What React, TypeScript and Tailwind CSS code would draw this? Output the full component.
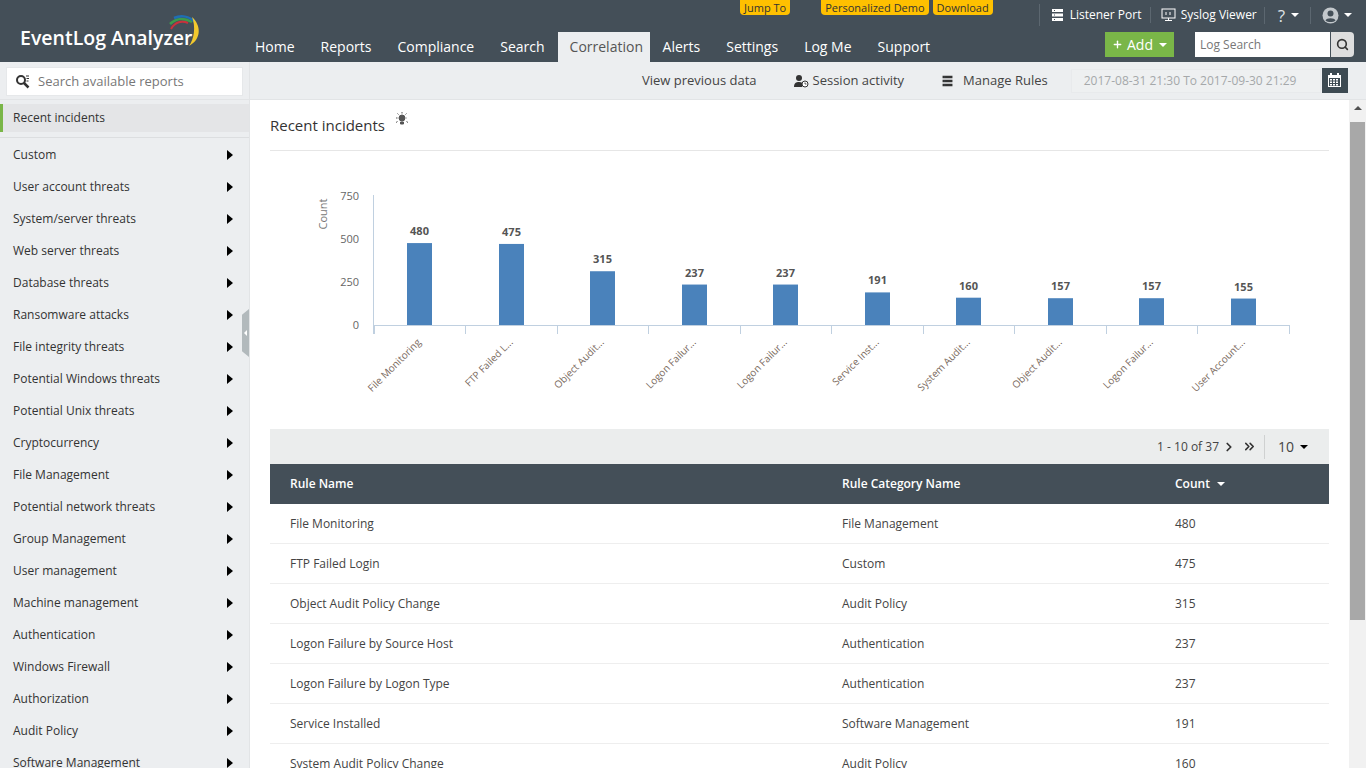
import { Search, ChevronRight, ChevronsRight, Plus, HelpCircle } from "lucide-react";

const sideItems = [
  "Custom",
  "User account threats",
  "System/server threats",
  "Web server threats",
  "Database threats",
  "Ransomware attacks",
  "File integrity threats",
  "Potential Windows threats",
  "Potential Unix threats",
  "Cryptocurrency",
  "File Management",
  "Potential network threats",
  "Group Management",
  "User management",
  "Machine management",
  "Authentication",
  "Windows Firewall",
  "Authorization",
  "Audit Policy",
  "Software Management",
];

const navItems = ["Home", "Reports", "Compliance", "Search", "Correlation", "Alerts", "Settings", "Log Me", "Support"];

const rows = [
  ["File Monitoring", "File Management", "480"],
  ["FTP Failed Login", "Custom", "475"],
  ["Object Audit Policy Change", "Audit Policy", "315"],
  ["Logon Failure by Source Host", "Authentication", "237"],
  ["Logon Failure by Logon Type", "Authentication", "237"],
  ["Service Installed", "Software Management", "191"],
  ["System Audit Policy Change", "Audit Policy", "160"],
];

const bars = [
  { x: 419.5, v: 480, label: "File Monitoring" },
  { x: 511.5, v: 475, label: "FTP Failed L..." },
  { x: 602.5, v: 315, label: "Object Audit..." },
  { x: 694.5, v: 237, label: "Logon Failur..." },
  { x: 785.5, v: 237, label: "Logon Failur..." },
  { x: 877.5, v: 191, label: "Service Inst..." },
  { x: 968.5, v: 160, label: "System Audit..." },
  { x: 1060.5, v: 157, label: "Object Audit..." },
  { x: 1151.5, v: 157, label: "Logon Failur..." },
  { x: 1243.5, v: 155, label: "User Account..." },
];

const ticks = [374, 465, 557, 648, 740, 831, 923, 1014, 1106, 1197, 1289];

const Caret = ({ className }: { className: string }) => (
  <span className={`inline-block w-0 h-0 border-x-[4px] border-x-transparent border-t-[4px] ${className}`} />
);

const Logo = () => (
  <div className="relative w-[242px] shrink-0 pl-5 pt-[24px]">
    <span className="text-[19.5px] leading-[28px] font-semibold text-white whitespace-nowrap">EventLog Analyzer</span>
    <svg className="absolute left-[165px] top-[14px]" width="40" height="36" viewBox="0 0 40 36" fill="none">
      <path d="M6 15 C10 8 17 6 23 9" stroke="#c8323c" strokeWidth="2" />
      <path d="M5 10 C10 5 18 3 27 8" stroke="#3c9a4c" strokeWidth="2.5" />
      <path d="M9 4 C16 1 24 2 30 8" stroke="#1f6fb4" strokeWidth="2.5" />
      <path d="M27 3 C36 11 37 25 24 32 C29 25 31 13 27 3 Z" fill="#f2c92e" />
    </svg>
  </div>
);

const ListIcon = ({ className }: { className: string }) => (
  <svg className={className} width="13" height="12" viewBox="0 0 13 12" fill="currentColor">
    <path d="M1 0h11v3H1zM1 4.500h11v3H1zM1 9h11v3H1z" />
    <path d="M3 1h1v1H3zM3 5.500h1v1H3zM3 10h1v1H3z" fill="#444f58" />
  </svg>
);

const Header = () => (
  <header className="flex h-[62px] bg-[#444f58] shrink-0">
    <Logo />
    <div className="flex-1 flex flex-col">
      <div className="h-[32px] flex items-start text-[11px]">
        <span className="ml-[498px] h-[15px] leading-[15px] px-1 bg-[#ffc000] rounded-b-sm text-[#333]">Jump To</span>
        <span className="ml-[31px] h-[15px] leading-[15px] px-1 bg-[#ffc000] rounded-b-sm text-[#333]">Personalized Demo</span>
        <span className="ml-1 h-[15px] leading-[15px] px-1 bg-[#ffc000] rounded-b-sm text-[#333]">Download</span>
        <div className="ml-[46px] h-[22px] mt-1 flex items-center text-white text-xs border-l border-[#5c6770]">
          <div className="w-[110px] pl-[11px] flex items-center gap-[6px]">
            <ListIcon className="text-white" />
            Listener Port
          </div>
          <div className="w-[114px] pl-[10px] border-l border-[#5c6770] flex items-center gap-[5px]">
            <svg width="15" height="14" viewBox="0 0 15 14" fill="none" stroke="white">
              <rect x="1" y="1" width="13" height="9" />
              <path d="M7.500 10v2M4 12.500h7" />
              <path d="M5 4v3M9 4v3" />
            </svg>
            Syslog Viewer
          </div>
          <div className="w-[46px] pl-[13px] border-l border-[#5c6770] flex items-center gap-[6px]">
            <span className="text-[17px] leading-none text-[#dfe3e6]">?</span>
            <Caret className="border-t-white" />
          </div>
          <div className="pl-[11px] border-l border-[#5c6770] flex items-center gap-[5px]">
            <svg width="17" height="17" viewBox="0 0 17 17">
              <circle cx="8.500" cy="8.500" r="8" fill="#c3c8cc" />
              <circle cx="8.500" cy="6.500" r="3" fill="#444f58" />
              <path d="M3.500 13.500c1-3 9-3 10 0-2.500 2-7.500 2-10 0z" fill="#444f58" />
            </svg>
            <Caret className="border-t-white" />
          </div>
        </div>
      </div>
      <div className="h-[30px] flex items-stretch">
        <nav className="flex text-sm">
          {navItems.map((item) =>
            item === "Correlation" ? (
              <span key={item} className="px-3 w-[92px] leading-[29px] text-center bg-[#eceef0] text-[#555]">
                {item}
              </span>
            ) : (
              <span key={item} className="px-[13px] leading-[29px] text-white">
                {item}
              </span>
            )
          )}
        </nav>
        <div className="ml-auto flex items-start pr-3">
          <div className="w-[69px] h-[25px] bg-[#7ab648] text-white text-sm flex items-center justify-center gap-1">
            <Plus size={11} strokeWidth={3} />
            Add
            <Caret className="ml-[2px] border-t-white" />
          </div>
          <div className="ml-[21px] w-[135px] h-[25px] bg-white text-xs text-[#777] leading-[25px] pl-[5px]">Log Search</div>
          <div className="ml-px w-[23px] h-[25px] bg-[#dedede] rounded-r-sm flex items-center justify-center">
            <Search size={13} strokeWidth={3} className="text-[#333]" />
          </div>
        </div>
      </div>
    </div>
  </header>
);

const Sidebar = () => (
  <aside className="w-[250px] shrink-0 bg-[#eceef0] border-r border-[#e2e4e6] flex flex-col overflow-hidden relative">
    <div className="h-[38px] px-[6px] pt-[5px] shrink-0 border-b border-[#e2e4e6]">
      <div className="w-[237px] h-[29px] bg-white border border-[#e6e8ea] flex items-center pl-2 gap-2 text-[13px] text-[#777]">
        <svg width="15" height="15" viewBox="0 0 15 15" fill="none" stroke="#333">
          <circle cx="6" cy="6" r="4" strokeWidth="2" />
          <path d="M9 9l4.500 4.500" strokeWidth="2.500" />
          <path d="M11 2h3M11.500 4.500h2.500M11.500 7h2" strokeWidth="1" />
        </svg>
        Search available reports
      </div>
    </div>
    <div className="mt-1 h-[28px] shrink-0 bg-[#e4e5e7] border-l-[3px] border-[#7ab648] pl-[10px] text-xs leading-[28px] text-[#333]">
      Recent incidents
    </div>
    <div className="mt-[5px] border-t border-[#dcdee0]">
      <ul className="pt-[1px]">
        {sideItems.map((item) => (
          <li key={item} className="h-[32px] pl-[13px] pr-4 flex items-center justify-between text-xs text-[#333]">
            <span>{item}</span>
            <span className="w-0 h-0 border-y-[5px] border-y-transparent border-l-[6px] border-l-black" />
          </li>
        ))}
      </ul>
    </div>
    <div className="absolute right-0 top-[247px] w-[7px] h-[48px] bg-[#b2b9bc] flex items-center justify-center [clip-path:polygon(0_12%,100%_0,100%_100%,0_88%)]">
      <span className="w-0 h-0 border-y-[3px] border-y-transparent border-r-[3px] border-r-white" />
    </div>
  </aside>
);

const Toolbar = () => (
  <div className="h-[38px] shrink-0 bg-[#eceef0] border-b border-[#e2e4e6] flex items-center text-[13px] text-[#444]">
    <span className="ml-[392px]">View previous data</span>
    <span className="ml-[37px] flex items-center gap-[4px]">
      <svg width="15" height="14" viewBox="0 0 15 14">
        <circle cx="5" cy="4" r="3" fill="#333" />
        <path d="M0 13c0-4 2-5 5-5s4 1 4 2l-1 3z" fill="#333" />
        <circle cx="11" cy="10" r="3" fill="white" stroke="#333" />
        <path d="M11 8.500V10h1.500" stroke="#333" fill="none" strokeWidth="0.800" />
      </svg>
      Session activity
    </span>
    <span className="ml-[37px] flex items-center gap-[9px]">
      <ListIcon className="text-[#333] scale-90" />
      Manage Rules
    </span>
    <div className="ml-[23px] w-[250px] h-[24px] bg-[#eef0f1] border border-[#e8eaec] text-xs leading-[22px] pl-[12px] text-[#a5a8aa]">
      2017-08-31 21:30 To 2017-09-30 21:29
    </div>
    <div className="ml-[1px] w-[26px] h-[25px] bg-[#3d4a52] flex items-center justify-center">
      <svg width="15" height="15" viewBox="0 0 15 15">
        <path d="M1 2h13v12H1z" fill="white" />
        <path d="M3 0h2v3H3zM10 0h2v3h-2z" fill="white" />
        <path d="M2 5h11v8H2z" fill="#3d4a52" />
        <path d="M3 6h2v1.500H3zM6 6h2v1.500H6zM9 6h2v1.500H9zM3 8.500h2V10H3zM6 8.500h2V10H6zM9 8.500h2V10H9zM3 11h2v1.500H3zM6 11h2v1.500H6zM9 11h2v1.500H9z" fill="white" />
      </svg>
    </div>
  </div>
);

const Chart = () => (
  <svg className="block" width="1059" height="278" viewBox="270 150 1059 278" fontFamily="'Open Sans', sans-serif">
    <path d="M373.500 194V333M373.500 324.500H1290" stroke="#c0d0e0" fill="none" />
    {ticks.map((x) => (
      <path key={x} d={`M${x}.5 324v9`} stroke="#c0d0e0" />
    ))}
    {[750, 500, 250, 0].map((v) => (
      <text key={v} x="359" y={328 - (v / 750) * 129} textAnchor="end" fontSize="11" fill="#666">
        {v}
      </text>
    ))}
    <text transform="translate(327 213) rotate(-90)" textAnchor="middle" fontSize="11" fill="#777">
      Count
    </text>
    {bars.map((b) => {
      const h = (b.v / 750) * 128;
      return (
        <g key={b.x}>
          <rect x={b.x - 12.5} y={324 - h} width="25" height={h} fill="#4a82bb" />
          <text x={b.x} y={324 - h - 8} textAnchor="middle" fontSize="11" fontWeight="700" fill="#555">
            {b.v}
          </text>
          <text transform={`translate(${b.x + 2} 342) rotate(-45)`} textAnchor="end" fontSize="10" fill="#7a6a60">
            {b.label}
          </text>
        </g>
      );
    })}
  </svg>
);

const Pager = () => (
  <div className="h-[35px] bg-[#ebeded] flex items-center justify-end text-xs text-[#444]">
    <span>1 - 10 of 37</span>
    <ChevronRight size={14} strokeWidth={3} className="ml-[3px] text-[#333]" />
    <ChevronsRight size={15} strokeWidth={2.500} className="ml-[6px] text-[#333]" />
    <div className="ml-[7px] h-[24px] w-[65px] border-l border-[#cfd1d1] flex items-center pl-[13px] gap-[6px] text-sm">
      10
      <Caret className="border-t-black" />
    </div>
  </div>
);

const Table = () => (
  <div>
    <Pager />
    <div className="h-[40px] bg-[#444f58] grid grid-cols-[552px_333px_1fr] items-center text-xs font-semibold text-white pl-5">
      <span>Rule Name</span>
      <span>Rule Category Name</span>
      <span className="flex items-center gap-[7px]">
        Count
        <Caret className="border-t-white" />
      </span>
    </div>
    {rows.map((row) => (
      <div key={row[0] + row[2]} className="h-[40px] grid grid-cols-[552px_333px_1fr] items-center text-xs text-[#444] pl-5 border-b border-[#eeeeee]">
        <span>{row[0]}</span>
        <span>{row[1]}</span>
        <span>{row[2]}</span>
      </div>
    ))}
  </div>
);

const Scrollbar = () => (
  <div className="w-[17px] shrink-0 bg-[#f1f1f1] flex flex-col items-center">
    <span className="mt-[6px] w-0 h-0 border-x-[4px] border-x-transparent border-b-[4px] border-b-[#505050]" />
    <div className="mt-[12px] w-[15px] h-[498px] bg-[#a8a8a8]" />
  </div>
);

export default function App() {
  return (
    <div className="h-[768px] w-[1366px] overflow-hidden flex flex-col bg-white font-['Open_Sans',sans-serif]">
      <Header />
      <div className="flex flex-1 min-h-0">
        <Sidebar />
        <main className="flex-1 min-w-0 flex flex-col">
          <Toolbar />
          <div className="flex flex-1 min-h-0">
            <div className="flex-1 min-w-0 overflow-hidden pl-5 pr-5">
              <div className="h-[51px] border-b border-[#e6e6e6] flex items-start pt-[15px] gap-[9px] text-[15px] text-[#333]">
                <span className="leading-[20px]">Recent incidents</span>
                <svg className="-mt-[4px]" width="16" height="16" viewBox="0 0 16 16" stroke="#555" fill="#555">
                  <circle cx="8" cy="7" r="3" />
                  <path d="M6.500 11h3v2h-3zM8 1v1.500M2 7h1.500M13 7h-0.500M3.500 2.500l1 1M12.500 2.500l-1 1M2 11.500l1.500-1M14 11.500l-1.500-1" strokeWidth="1" />
                </svg>
              </div>
              <Chart />
              <Table />
            </div>
            <Scrollbar />
          </div>
        </main>
      </div>
    </div>
  );
}
